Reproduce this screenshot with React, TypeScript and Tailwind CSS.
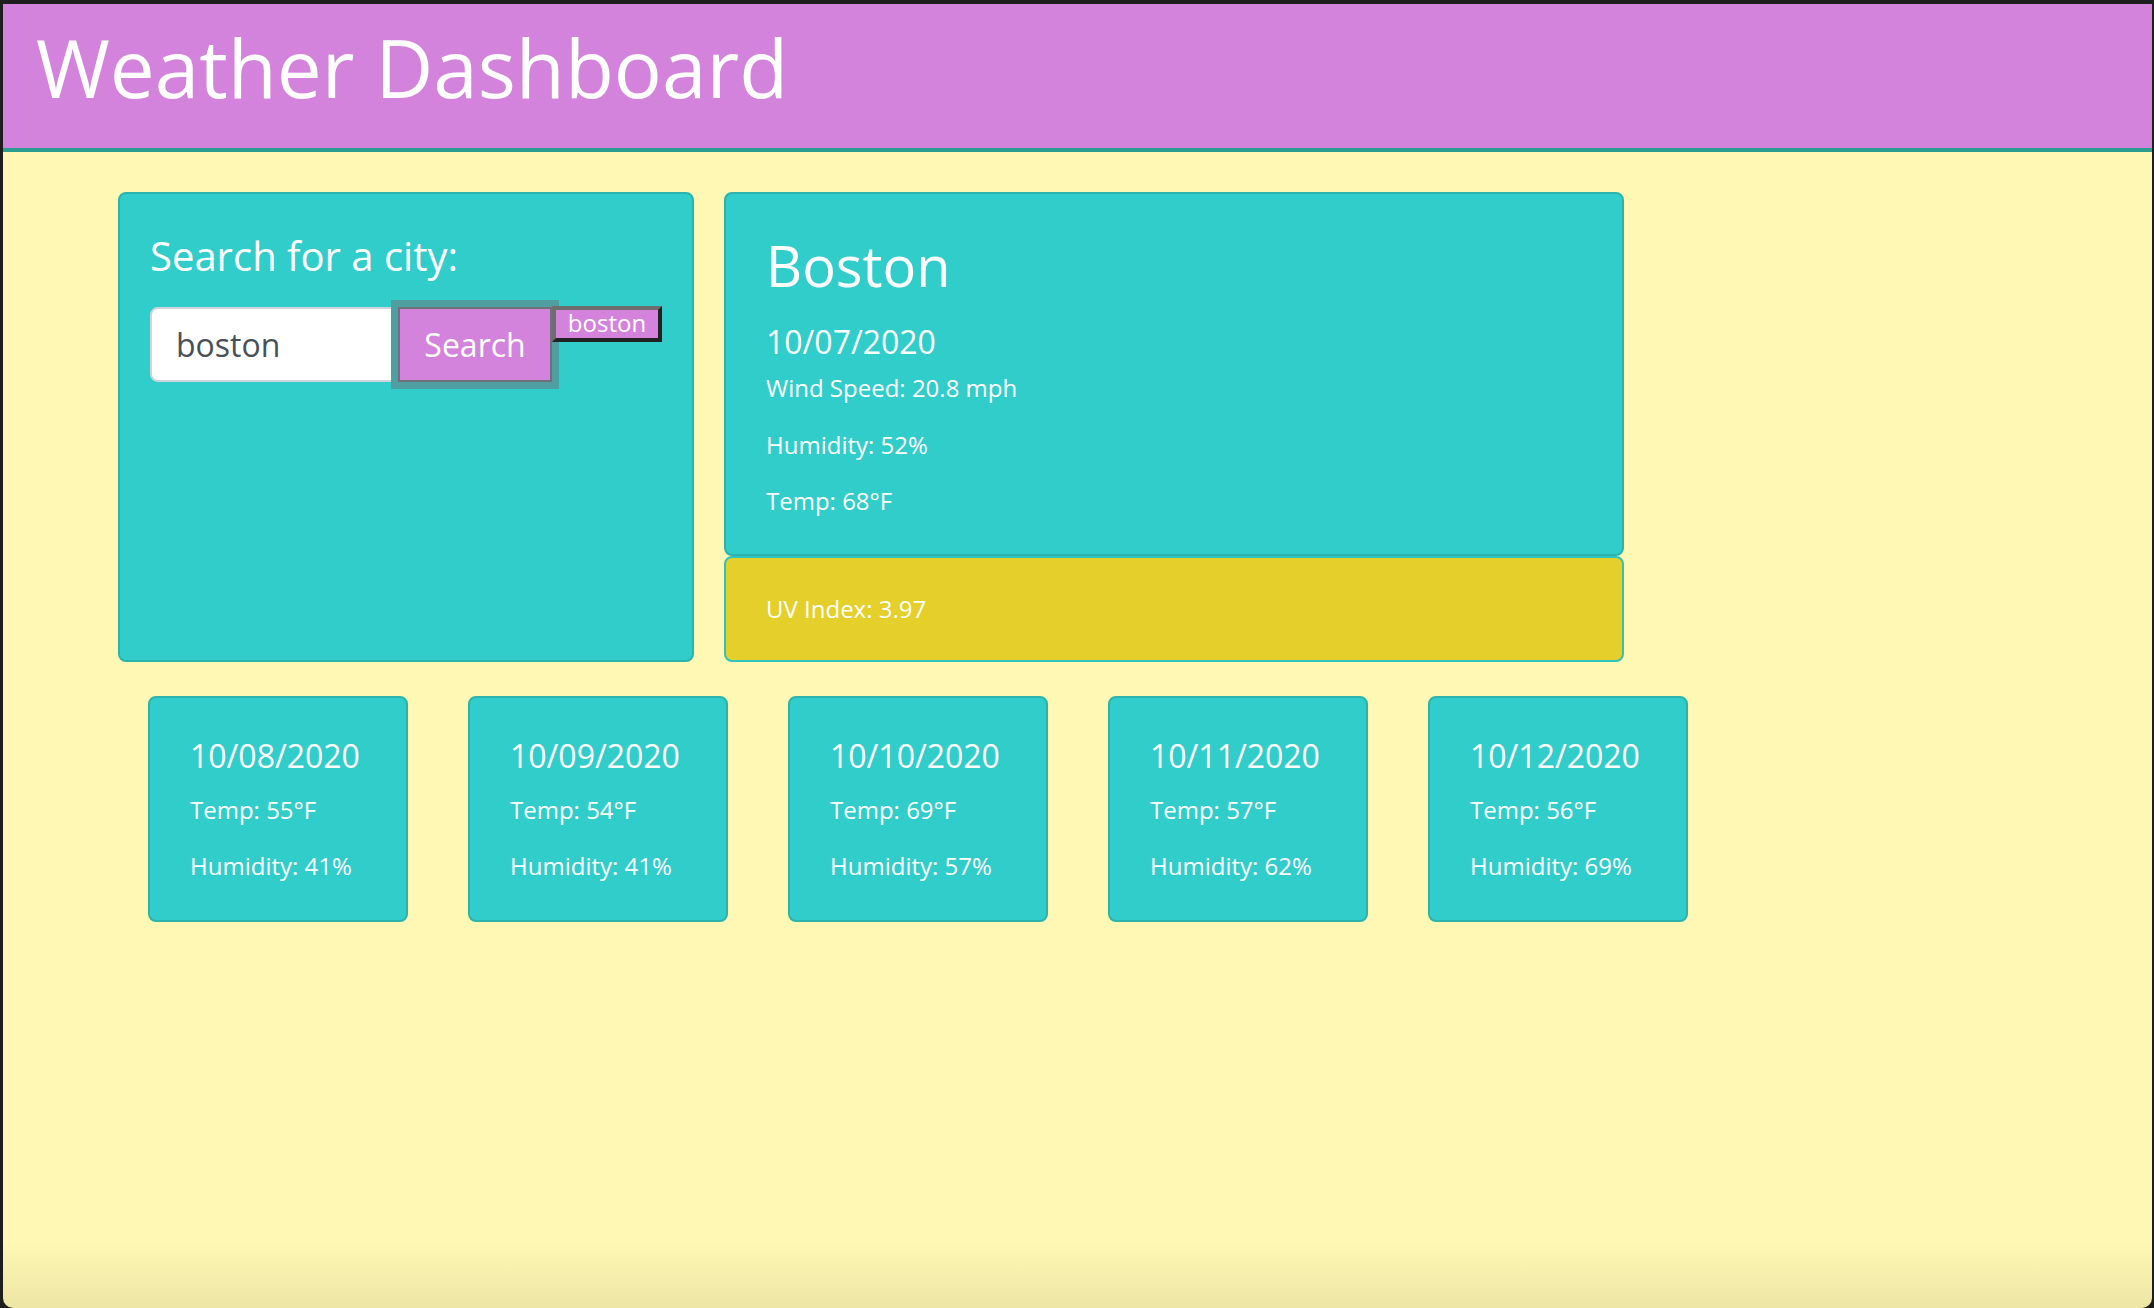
import React from "react";

const forecast = [
  { date: "10/08/2020", temp: "55", hum: "41" },
  { date: "10/09/2020", temp: "54", hum: "41" },
  { date: "10/10/2020", temp: "69", hum: "57" },
  { date: "10/11/2020", temp: "57", hum: "62" },
  { date: "10/12/2020", temp: "56", hum: "69" },
];

export default function App() {
  return (
    <div className="w-[2154px] h-[1308px] bg-[#1e1e1e] pt-[4px] pl-[3px] pr-[2px] overflow-hidden font-['Open_Sans',sans-serif]">
      <div className="h-[1304px] flex flex-col rounded-b-[10px] overflow-hidden bg-[linear-gradient(to_bottom,#fef8b4_0%,#fef8b4_95%,#ece5a4_100%)]">
        <header className="h-[148px] shrink-0 bg-[#d383db] border-b-4 border-[#2a9d8f] pl-[33px] pt-[15px]">
          <h1 className="text-[80px] leading-[96px] text-white font-normal">Weather Dashboard</h1>
        </header>
        <main className="pl-[115px] pt-[40px]">
          <div className="flex gap-[30px]">
            <section className="w-[576px] h-[470px] bg-[#31cdcb] border-2 border-[#2bb3ae] rounded-[8px] px-[30px] pt-[38px] text-white">
              <h5 className="text-[40px] leading-[48px] mb-[27px]">Search for a city:</h5>
              <div className="flex items-start">
                <input
                  readOnly
                  value="boston"
                  className="w-[248px] h-[75px] bg-white border-2 border-[#ced4da] rounded-l-[8px] pl-[24px] text-[32px] text-[#495057] outline-none font-['Open_Sans',sans-serif]"
                />
                <button className="relative z-10 h-[75px] w-[154px] bg-[#d383db] border-2 border-[#6c7278] shadow-[0_0_0_7px_#4f9fa0] text-white text-[32px] font-['Open_Sans',sans-serif]">
                  Search
                </button>
                <button className="relative z-20 -mt-[1px] h-[36px] w-[110px] bg-[#d383db] border-4 border-t-[#6e6e6e] border-l-[#6e6e6e] border-b-[#222222] border-r-[#222222] text-white text-[24px] leading-[26px] pb-[2px] font-['Open_Sans',sans-serif]">
                  boston
                </button>
              </div>
            </section>
            <div className="flex flex-col w-[900px]">
              <section className="h-[364px] bg-[#31cdcb] border-2 border-[#2bb3ae] rounded-[8px] px-[40px] pt-[38px] text-white">
                <h3 className="text-[56px] leading-[67px] mb-[24px]">Boston</h3>
                <h6 className="text-[32px] leading-[38px] mb-[9px]">10/07/2020</h6>
                <p className="text-[24px] leading-[36px] mb-[20.5px]">Wind Speed: 20.8 mph</p>
                <p className="text-[24px] leading-[36px] mb-[20px]">Humidity: 52%</p>
                <p className="text-[24px] leading-[36px]">Temp: 68°F</p>
              </section>
              <section className="h-[106px] bg-[#e4cf2b] border-2 border-[#2fc3c0] rounded-[8px] px-[40px] flex items-center text-white">
                <p className="text-[24px] leading-[36px]">UV Index: 3.97</p>
              </section>
            </div>
          </div>
          <div className="mt-[34px] pl-[30px] flex gap-[60px]">
            {forecast.map((f) => (
              <div
                key={f.date}
                className="w-[260px] h-[226px] bg-[#31cdcb] border-2 border-[#2bb3ae] rounded-[8px] px-[40px] pt-[39px] text-white"
              >
                <h6 className="text-[32px] leading-[38px] mb-[17px]">{f.date}</h6>
                <p className="text-[24px] leading-[36px] mb-[20px]">Temp: {f.temp}°F</p>
                <p className="text-[24px] leading-[36px]">Humidity: {f.hum}%</p>
              </div>
            ))}
          </div>
        </main>
      </div>
    </div>
  );
}
